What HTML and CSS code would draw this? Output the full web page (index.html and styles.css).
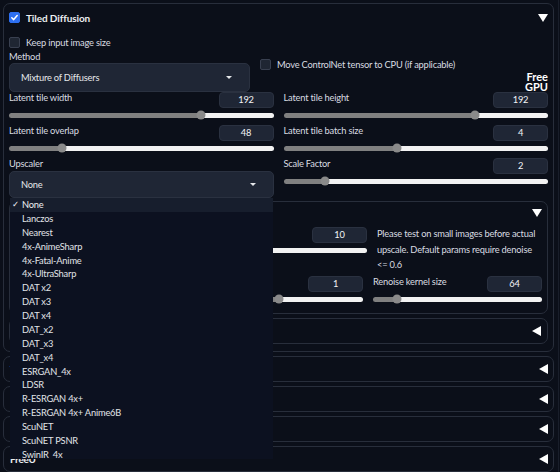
FILE: index.html
```html
<!DOCTYPE html>
<html>
<head>
<meta charset="utf-8">
<link rel="stylesheet" href="styles.css">
</head>
<body>
<div class="page">
  <div class="acc outer">
    <div class="acc-head">
      <span class="cb on"><svg width="9" height="9" viewBox="0 0 9 9"><polyline points="1.8,4.8 3.7,6.6 7.2,2.6" fill="none" stroke="#fff" stroke-width="1.5" stroke-linecap="round" stroke-linejoin="round"/></svg></span>
      <span class="title">Tiled Diffusion</span>
      <span class="tri-down"></span>
    </div>
    <div class="check-row keep"><span class="cb"></span><span>Keep input image size</span></div>
    <div class="method-row">
      <div class="method-col">
        <div class="lbl">Method</div>
        <div class="dd"><span>Mixture of Diffusers</span><span class="caret"></span></div>
      </div>
      <div class="check-row cn"><span class="cb"></span><span>Move ControlNet tensor to CPU (if applicable)</span></div>
      <div class="freegpu">Free GPU</div>
    </div>
    <div class="grid2">
      <div class="col">
        <div class="sl">
          <div class="sl-head"><span class="lbl">Latent tile width</span><span class="num">192</span></div>
          <div class="track" style="--p:72.7%"><span class="thumb"></span></div>
        </div>
        <div class="sl">
          <div class="sl-head"><span class="lbl">Latent tile overlap</span><span class="num">48</span></div>
          <div class="track" style="--p:20%"><span class="thumb"></span></div>
        </div>
        <div class="lbl">Upscaler</div>
        <div class="dd up"><span>None</span><span class="caret"></span></div>
      </div>
      <div class="col">
        <div class="sl">
          <div class="sl-head"><span class="lbl">Latent tile height</span><span class="num">192</span></div>
          <div class="track" style="--p:72.4%"><span class="thumb"></span></div>
        </div>
        <div class="sl">
          <div class="sl-head"><span class="lbl">Latent tile batch size</span><span class="num">4</span></div>
          <div class="track" style="--p:42.9%"><span class="thumb"></span></div>
        </div>
        <div class="sl">
          <div class="sl-head"><span class="lbl">Scale Factor</span><span class="num">2</span></div>
          <div class="track" style="--p:15.7%"><span class="thumb"></span></div>
        </div>
      </div>
    </div>

    <div class="acc nested">
      <div class="nhead">
        <span class="cb"></span><span class="ntitle">Noise Inversion</span>
        <span class="tri-down"></span>
      </div>
      <div class="nbody">
        <div class="nrow1">
          <div class="sl">
            <div class="sl-head"><span class="lbl">Inversion steps</span><span class="num">10</span></div>
            <div class="track" style="--p:4.5%"><span class="thumb"></span></div>
          </div>
          <div class="note">Please test on small images before actual<br>upscale. Default params require denoise<br>&lt;= 0.6</div>
        </div>
        <div class="nrow2">
          <div class="sl">
            <div class="sl-head"><span class="lbl">Retouch</span><span class="num">1</span></div>
            <div class="track" style="--p:10%"><span class="thumb"></span></div>
          </div>
          <div class="sl">
            <div class="sl-head"><span class="lbl">Renoise strength</span><span class="num">1</span></div>
            <div class="track" style="--p:50%"><span class="thumb"></span></div>
          </div>
          <div class="sl">
            <div class="sl-head"><span class="lbl">Renoise kernel size</span><span class="num">64</span></div>
            <div class="track" style="--p:14%"><span class="thumb"></span></div>
          </div>
        </div>
      </div>
    </div>

    <div class="acc nested small">
      <span class="ntitle">Region Prompt Control</span>
      <span class="tri-left"></span>
    </div>
  </div>

  <div class="acc lower"><span class="ltitle">Tiled VAE</span><span class="tri-left"></span></div>
  <div class="acc lower"><span class="ltitle">Refiner</span><span class="tri-left"></span></div>
  <div class="acc lower"><span class="cb on"></span><span class="ltitle">Seed</span><span class="tri-left"></span></div>
  <div class="acc lower"><span class="ltitle">FreeU</span><span class="tri-left"></span></div>

  <div class="dd-list">
    <div class="opt sel">None</div>
    <div class="opt">Lanczos</div>
    <div class="opt">Nearest</div>
    <div class="opt">4x-AnimeSharp</div>
    <div class="opt">4x-Fatal-Anime</div>
    <div class="opt">4x-UltraSharp</div>
    <div class="opt">DAT x2</div>
    <div class="opt">DAT x3</div>
    <div class="opt">DAT x4</div>
    <div class="opt">DAT_x2</div>
    <div class="opt">DAT_x3</div>
    <div class="opt">DAT_x4</div>
    <div class="opt">ESRGAN_4x</div>
    <div class="opt">LDSR</div>
    <div class="opt">R-ESRGAN 4x+</div>
    <div class="opt">R-ESRGAN 4x+ Anime6B</div>
    <div class="opt">ScuNET</div>
    <div class="opt">ScuNET PSNR</div>
    <div class="opt">SwinIR_4x</div>
  </div>
</div>
</body>
</html>
```

FILE: styles.css
```css
* { box-sizing: border-box; margin: 0; padding: 0; }
html, body { width: 560px; height: 472px; overflow: hidden; background: #0b0f19; }
body {
  font-family: Lato, "Noto Sans", "DejaVu Sans", sans-serif;
  color: #d9dce1;
  font-size: 9.3px;
  letter-spacing: -0.2px;
}
.page {
  position: relative;
  width: 559px;
  height: 472px;
  padding: 3px 4px 0 3px;
  border-right: 1px solid #191e2a;
}
.acc { border: 1px solid #282e3b; border-radius: 7px; }
.outer { padding: 0 5px 7px 5px; }
.acc-head { display: flex; align-items: center; height: 27px; }
.title { font-size: 10px; font-weight: 700; color: #eceef1; margin-left: 6px; letter-spacing: -0.1px; }
.tri-down {
  margin-left: auto;
  width: 0; height: 0;
  border-left: 5px solid transparent;
  border-right: 5px solid transparent;
  border-top: 8px solid #fff;
}
.tri-left {
  margin-left: auto;
  width: 0; height: 0;
  border-top: 5px solid transparent;
  border-bottom: 5px solid transparent;
  border-right: 9px solid #fff;
}
.cb {
  flex: none;
  width: 11px; height: 11px;
  border-radius: 2px;
  background: #1f2633;
  border: 1px solid #394050;
  display: inline-flex; align-items: center; justify-content: center;
}
.cb.on { background: #2d6ff0; border-color: #2d6ff0; }
.check-row { display: flex; align-items: center; gap: 6px; height: 11px; }
.keep { margin-top: 6px; }
.method-row { display: flex; margin-top: 3px; height: 41px; }
.method-col { width: 241px; flex: none; }
.lbl { line-height: 12px; height: 12px; white-space: nowrap; }
.dd {
  height: 29px;
  background: #1f2635;
  border: 1px solid #2a3140;
  border-radius: 5px;
  display: flex; align-items: center;
  padding: 0 17px 0 11px;
  color: #e6e8eb;
}
.dd.up { height: 27px; margin-top: 1px; }
.caret {
  margin-left: auto;
  width: 0; height: 0;
  border-left: 3px solid transparent;
  border-right: 3px solid transparent;
  border-top: 3px solid #e6e8eb;
}
.cn { margin-left: 10px; margin-top: 8px; }
.freegpu {
  margin-left: auto;
  align-self: flex-start;
  margin-top: 21px;
  width: min-content;
  text-align: right;
  font-size: 11px;
  font-weight: 700;
  line-height: 10px;
  letter-spacing: 0;
  color: #fff;
}
.grid2 { display: grid; grid-template-columns: 1fr 1fr; column-gap: 10px; }
.col .sl { height: 33px; }
.sl-head { display: flex; justify-content: space-between; align-items: flex-start; height: 16px; }
.num {
  flex: none;
  width: 55px; height: 16px;
  background: #1f2635;
  border: 1px solid #2a3140;
  border-radius: 4px;
  text-align: center;
  line-height: 14px;
  color: #f4f5f7;
}
.track {
  position: relative;
  margin-top: 4.5px;
  height: 5px;
  border-radius: 3px;
  background: linear-gradient(to right, #808080 var(--p), #f2f2f2 var(--p));
}
.thumb {
  position: absolute;
  top: 50%;
  left: var(--p);
  width: 9px; height: 9px;
  border-radius: 50%;
  background: #8a8a8a;
  transform: translate(-50%, -50%);
}
.nested { margin-top: 3px; padding: 0 5px; }
.nhead { display: flex; align-items: center; height: 22px; gap: 6px; }
.nhead .tri-down { border-left-width: 5.5px; border-right-width: 5.5px; }
.ntitle { font-size: 10px; font-weight: 700; color: #eceef1; }
.nbody { padding: 3px 0 11.5px; }
.nrow1 { display: grid; grid-template-columns: 352px 1fr; column-gap: 10px; height: 46.5px; }
.note { line-height: 15.5px; margin-top: -0.8px; white-space: nowrap; }
.nrow2 { display: grid; grid-template-columns: 1fr 1fr 1fr; column-gap: 10px; margin-top: 2.5px; }
.nested.small {
  margin-top: 4px;
  height: 26px;
  display: flex; align-items: center;
  padding: 0 6px;
}
.lower {
  margin-top: 4px;
  height: 26px;
  display: flex; align-items: center;
  gap: 6px;
  padding: 0 5px 0 6px;
}
.ltitle { font-size: 10px; font-weight: 700; color: #eceef1; }
.dd-list {
  position: absolute;
  left: 10px; top: 198px;
  width: 263px; height: 261px;
  overflow: hidden;
  background: #0c1120;
}
.opt {
  position: relative;
  height: 13.89px;
  line-height: 13.89px;
  padding-left: 12px;
  color: #e1e4e8;
  white-space: nowrap;
}
.opt.sel { background: #171e2d; color: #eef0f3; }
.opt.sel::before {
  content: "\2713";
  position: absolute;
  left: 2px; top: 0;
  font-family: "DejaVu Sans", sans-serif;
  font-size: 8.5px;
}
```
